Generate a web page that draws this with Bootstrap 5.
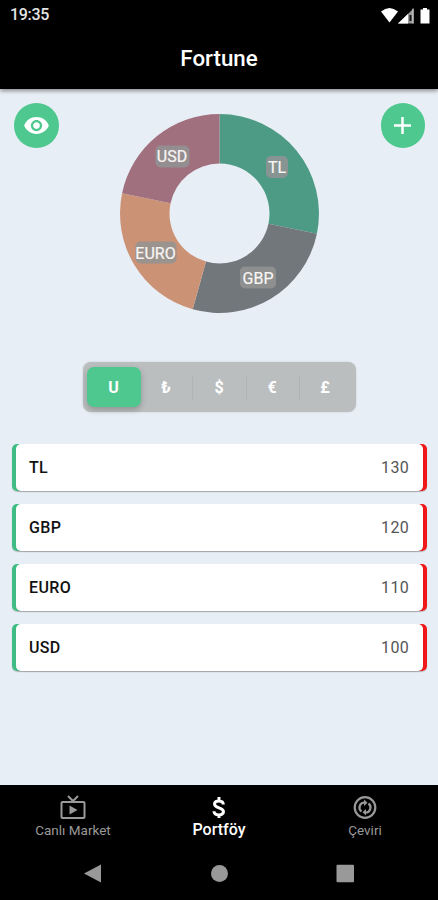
<!DOCTYPE html>
<html lang="tr">
<head>
<meta charset="utf-8">
<meta name="viewport" content="width=device-width, initial-scale=1">
<title>Fortune</title>
<link href="https://cdn.jsdelivr.net/npm/bootstrap@5.3.0/dist/css/bootstrap.min.css" rel="stylesheet">
<style>
body{font-family:Roboto,"Liberation Sans",sans-serif;background:#e8eef5;height:900px;overflow:hidden}
svg{display:block}
.app-head{height:89px;box-shadow:0 2px 4px rgba(0,0,0,.4)}
.status-bar{height:29px;padding:0 8px 0 10px;font-size:16px;font-weight:500;color:#e4e4e4;letter-spacing:-.3px}
.app-title{height:60px;font-size:22.300px;font-weight:500}
.chart-zone{padding:14px 13px 0 14px;height:273px}
.round-btn{width:44.500px;height:44.500px;background:#4fc88f}
.donut{width:200px;height:200px;margin-top:10.500px}
.donut text{font-size:16px;font-weight:400;fill:#f8f6f4;stroke:#f8f6f4;stroke-width:.2px;text-anchor:middle}
.donut .chip{fill:#939393;fill-opacity:.85}
.segments{width:273px;height:50px;padding:5px 4px;background:#bbbebf;border-radius:8px;box-shadow:0 0 2px rgba(0,0,0,.15)}
.segments .seg{width:53px;padding-top:1px;font-size:16px;font-weight:700;color:#fff;border-radius:7px}
.segments .on{width:54px;background:#4fc88f;box-shadow:0 3px 6px rgba(0,0,0,.22);margin-right:-1px}
.segments .rule::after{content:"";width:1px;height:26px;background:#b0b4b5;margin-right:-1px}
.segments .rule::before{content:"";width:0}
.rows{padding:32px 11px 0 12px;gap:13px}
.money{height:47px;padding:0 4px;background:linear-gradient(90deg,#3fbd85 50%,#f01818 50%);border-radius:5px;box-shadow:0 1px 1px rgba(0,0,0,.2);font-size:16px}
.money-face{padding:0 14px 0 13px;border-radius:5px;color:#111;box-shadow:0 1px 1px rgba(90,90,90,.25)}
.money .name{font-weight:500;letter-spacing:.35px}
.money .amt{color:#555;letter-spacing:.3px}
.tabs-bar{height:115px}
.tabs-row{height:63px;padding-top:10px}
.tab-item{color:#999;font-size:13.500px;line-height:18px}
.tab-item.on{color:#fff;font-size:16px;font-weight:500}
.keys{height:52px}
</style>
<script src="https://cdn.jsdelivr.net/npm/bootstrap@5.3.0/dist/js/bootstrap.bundle.min.js"></script>
</head>
<body class="d-flex flex-column">
<header class="app-head bg-black text-white flex-shrink-0">
  <div class="status-bar d-flex justify-content-between align-items-center">
    <span>19:35</span>
    <svg width="49" height="18" viewBox="0 0 49 18" fill="#fff"><path d="M0 5.500Q8.500-1.600 17 5.500L8.500 16.500Z"/><path d="M17 17.500 32.500 2.500V17.500Z" fill="#999"/><path d="M17 17.500 27 8V17.500Z"/><path d="M28.500 9h2v6h-2z" fill="#111"/><path d="M32 2.500v15" stroke="#ddd"/><path d="M42 2h4v1.500h2.500v14H39.500v-14H42Z"/></svg>
  </div>
  <div class="app-title d-flex justify-content-center align-items-center">Fortune</div>
</header>
<main class="flex-grow-1">
  <div class="chart-zone d-flex justify-content-between">
    <button class="round-btn btn p-0 border-0 rounded-circle d-flex justify-content-center align-items-center" aria-label="Göster"><svg width="27" height="27" viewBox="0 0 24 24" fill="#fff"><path d="M12 4.500C7 4.500 2.730 7.610 1 12c1.730 4.390 6 7.500 11 7.500s9.270-3.110 11-7.500c-1.730-4.390-6-7.500-11-7.500zM12 17c-2.760 0-5-2.240-5-5s2.240-5 5-5 5 2.240 5 5-2.240 5-5 5zm0-8c-1.660 0-3 1.340-3 3s1.340 3 3 3 3-1.340 3-3-1.340-3-3-3z"/></svg></button>
    <svg class="donut" viewBox="-99.500 -99.500 200 200">
      <path fill="#4d9b84" d="M0-99.500A99.500 99.500 0 0 1 97.400 20.200L48.950 10.200A50 50 0 0 0 0-50Z"/>
      <path fill="#72777c" d="M97.400 20.200A99.500 99.500 0 0 1-26.800 95.800L-13.500 48.100A50 50 0 0 0 48.950 10.200Z"/>
      <path fill="#cb9275" d="M-26.800 95.800A99.500 99.500 0 0 1-97.400-20.200L-48.950-10.200A50 50 0 0 0-13.500 48.100Z"/>
      <path fill="#a0707f" d="M-97.400-20.200A99.500 99.500 0 0 1 0-99.500V-50A50 50 0 0 0-48.950-10.200Z"/>
      <rect class="chip" x="46.500" y="-57.500" width="22" height="22" rx="5"/><text x="57.500" y="-41">TL</text>
      <rect class="chip" x="20.500" y="53" width="36" height="22" rx="5"/><text x="38.500" y="70">GBP</text>
      <rect class="chip" x="-84" y="28" width="41" height="22" rx="5"/><text x="-64" y="45">EURO</text>
      <rect class="chip" x="-64" y="-68" width="34" height="22" rx="5"/><text x="-47.500" y="-51.500">USD</text>
    </svg>
    <button class="round-btn btn p-0 border-0 rounded-circle d-flex justify-content-center align-items-center" aria-label="Ekle"><svg width="17" height="17" viewBox="0 0 17 17" stroke="#fff" stroke-width="2.500"><path d="M0 8.500H17M8.500 0V17"/></svg></button>
  </div>
  <div class="segments d-flex mx-auto">
    <div class="seg on d-flex align-items-center justify-content-center">U</div>
    <div class="seg rule d-flex align-items-center justify-content-between">₺</div>
    <div class="seg rule d-flex align-items-center justify-content-between">$</div>
    <div class="seg rule d-flex align-items-center justify-content-between">€</div>
    <div class="seg d-flex align-items-center justify-content-center">£</div>
  </div>
  <div class="rows d-flex flex-column">
    <div class="money"><div class="money-face bg-white h-100 d-flex justify-content-between align-items-center"><span class="name">TL</span><span class="amt">130</span></div></div>
    <div class="money"><div class="money-face bg-white h-100 d-flex justify-content-between align-items-center"><span class="name">GBP</span><span class="amt">120</span></div></div>
    <div class="money"><div class="money-face bg-white h-100 d-flex justify-content-between align-items-center"><span class="name">EURO</span><span class="amt">110</span></div></div>
    <div class="money"><div class="money-face bg-white h-100 d-flex justify-content-between align-items-center"><span class="name">USD</span><span class="amt">100</span></div></div>
  </div>
</main>
<footer class="tabs-bar bg-black flex-shrink-0">
  <nav class="tabs-row row g-0 text-center">
    <div class="col tab-item d-flex flex-column align-items-center"><svg width="26" height="26" viewBox="0 0 26 26" fill="none" stroke="#999" stroke-width="2"><rect x="1.500" y="7" width="23" height="16" rx="1"/><path d="M8 1l5 5 5-5"/><path d="M9.500 10.500v9l8-4.500z" fill="#999" stroke="none"/></svg><span>Canlı Market</span></div>
    <div class="col tab-item on d-flex flex-column align-items-center"><svg width="26" height="26" viewBox="0 0 26 26" fill="none" stroke="#fff" stroke-width="3"><path d="M17.300 9.500C17.300 4.800 8.500 4.800 8.500 9c0 4.500 9 3.300 9 7.800 0 4.200-9.500 4.200-9.500-.5M13 2v4M13 19v4"/></svg><span>Portföy</span></div>
    <div class="col tab-item d-flex flex-column align-items-center"><svg width="26" height="26" viewBox="0 0 26 26" fill="none" stroke="#999" stroke-width="2.200"><circle cx="13" cy="12.500" r="10.300"/><path d="M9.500 16.500A5 5 0 0 1 12.500 7.500M16.500 8.500A5 5 0 0 1 13.500 17.500"/><path d="M12 4.500 15.500 7.700 12 11ZM14 14 10.500 17.300 14 20.500Z" fill="#999" stroke="none"/></svg><span>Çeviri</span></div>
  </nav>
  <div class="keys d-flex justify-content-center align-items-center">
    <svg width="270" height="20" viewBox="0 0 270 20" fill="#999"><path d="M0 9.500 17 .5v18z"/><circle cx="135.500" cy="9.500" r="8.500"/><rect x="252.500" y=".7" width="17.500" height="17.500" rx="1"/></svg>
  </div>
</footer>
</body>
</html>
